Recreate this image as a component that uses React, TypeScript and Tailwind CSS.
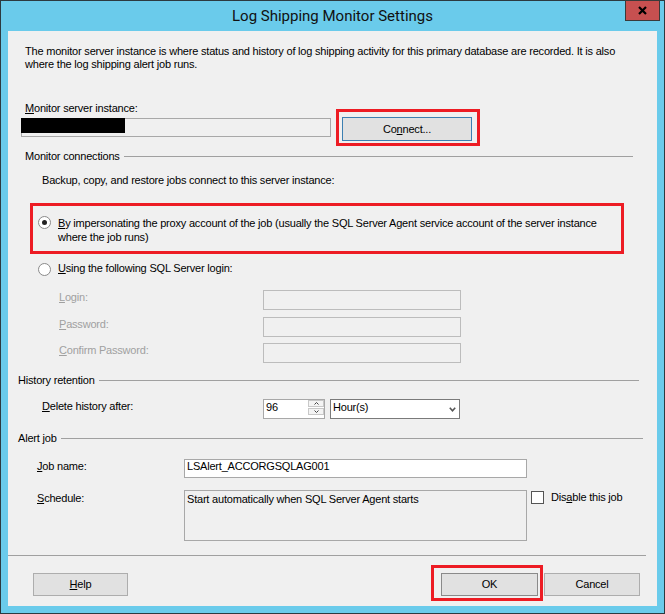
import React from 'react';

const Radio = ({ checked }: { checked?: boolean }) => (
  <span className="w-[13px] h-[13px] rounded-full border border-[#8a8a8a] bg-white flex items-center justify-center shrink-0">
    {checked && <span className="w-[5px] h-[5px] rounded-full bg-[#222]" />}
  </span>
);

const Btn: React.FC<{ className: string; children: React.ReactNode }> = ({ className, children }) => (
  <div className={`h-[23px] bg-[#e1e1e1] border flex items-center justify-center shrink-0 ${className}`}>{children}</div>
);

export default function App() {
  return (
    <div className="w-[665px] h-[614px] border border-[#2c3a40] bg-[#6acbeb] flex flex-col font-['Liberation_Sans',Arial,sans-serif] text-[11px] leading-[13px] tracking-[-0.2px] text-black select-none">
      {/* title bar */}
      <div className="relative h-[30px] shrink-0 flex items-center justify-center">
        <span className="text-[15px] leading-[20px] tracking-normal font-['Roboto',sans-serif] text-[#111]">Log Shipping Monitor Settings</span>
        <div className="absolute -top-px right-[4px] w-[35px] h-[21px] bg-[#c75050] border border-[#3a3a3a] flex items-center justify-center">
          <svg width="9" height="9" viewBox="0 0 9 9">
            <path d="M1 1 L8 8 M8 1 L1 8" stroke="#000" strokeWidth="2.2" />
          </svg>
        </div>
      </div>

      {/* client area */}
      <div className="mx-[7px] h-[575px] bg-[#f0f0f0] flex flex-col">
        <div className="pt-[14px] pl-[17px] whitespace-nowrap">
          The monitor server instance is where status and history of log shipping activity for this primary database are recorded. It is also
          <br />
          where the log shipping alert job runs.
        </div>

        <div className="mt-[31px] pl-[17px]"><u>M</u>onitor server instance:</div>
        <div className="mt-[3px] h-[19px] pl-[13px] flex items-center">
          <div className="relative w-[310px] h-[19px] border border-[#a8a8a8] bg-[#f0f0f0] shrink-0">
            <div className="absolute -left-px -top-px w-[104px] h-[15px] bg-black" />
          </div>
          <div className="ml-[5px] w-[144px] h-[37px] border-[3px] border-[#ed1c24] pl-[3px] pt-[5px] shrink-0">
            <Btn className="w-[130px] h-[24px] border-[#3c7fb1]">Co<u>n</u>nect...</Btn>
          </div>
        </div>

        <div className="mt-[13px] ml-[17px] mr-[24px] flex items-center">
          <span>Monitor connections</span>
          <div className="flex-1 h-px bg-[#a0a0a0] ml-[4px]" />
        </div>
        <div className="mt-[11px] pl-[34px]">Backup, copy, and restore jobs connect to this server instance:</div>

        <div className="mt-[16px] ml-[22px] w-[594px] h-[51px] border-[3px] border-[#ed1c24] pt-[10px] pl-[5px] flex items-start">
          <Radio checked />
          <div className="ml-[7px] leading-[14px] whitespace-nowrap">
            <u>B</u>y impersonating the proxy account of the job (usually the SQL Server Agent service account of the server instance
            <br />
            where the job runs)
          </div>
        </div>

        <div className="mt-[7px] pl-[30px] flex items-start leading-[14px]">
          <div className="mt-[2px]"><Radio /></div>
          <div className="ml-[7px]"><u>U</u>sing the following SQL Server login:</div>
        </div>

        <div className="mt-[14px] h-[20px] flex items-start">
          <div className="w-[255px] pl-[51px] mt-[1px] text-[#a0a0a0] shrink-0"><u>L</u>ogin:</div>
          <div className="w-[198px] h-[20px] border border-[#bcbcbc] bg-[#f0f0f0]" />
        </div>
        <div className="mt-[7px] h-[20px] flex items-start">
          <div className="w-[255px] pl-[51px] mt-[1px] text-[#a0a0a0] shrink-0"><u>P</u>assword:</div>
          <div className="w-[198px] h-[20px] border border-[#bcbcbc] bg-[#f0f0f0]" />
        </div>
        <div className="mt-[6px] h-[20px] flex items-start">
          <div className="w-[255px] pl-[51px] mt-[1px] text-[#a0a0a0] shrink-0"><u>C</u>onfirm Password:</div>
          <div className="w-[198px] h-[20px] border border-[#bcbcbc] bg-[#f0f0f0]" />
        </div>

        <div className="mt-[11px] ml-[10px] mr-[18px] flex items-center">
          <span>History retention</span>
          <div className="flex-1 h-px bg-[#a0a0a0] ml-[4px]" />
        </div>
        <div className="mt-[12px] h-[20px] flex items-start">
          <div className="w-[255px] pl-[34px] mt-px shrink-0"><u>D</u>elete history after:</div>
          <div className="w-[62px] h-[20px] border border-[#a8a8a8] bg-white flex shrink-0">
            <div className="flex-1 pl-[2px] pt-px">96</div>
            <div className="w-[16px] flex flex-col gap-px">
              <div className="h-[7px] border border-[#c8c8c8] bg-[#f4f4f4] flex items-center justify-center">
                <svg width="5" height="3" viewBox="0 0 5 3"><path d="M0.5 2.5 L2.5 0.5 L4.5 2.5" stroke="#444" fill="none" /></svg>
              </div>
              <div className="h-[7px] border border-[#c8c8c8] bg-[#f4f4f4] flex items-center justify-center">
                <svg width="5" height="3" viewBox="0 0 5 3"><path d="M0.5 0.5 L2.5 2.5 L4.5 0.5" stroke="#444" fill="none" /></svg>
              </div>
            </div>
          </div>
          <div className="ml-[5px] w-[130px] h-[20px] border border-[#7a7a7a] bg-white flex items-start shrink-0">
            <div className="flex-1 pl-[2px] pt-px">Hour(s)</div>
            <div className="mr-[3px] mt-[7px]">
              <svg width="7" height="5" viewBox="0 0 7 5"><path d="M0.8 0.8 L3.5 3.8 L6.2 0.8" stroke="#555" strokeWidth="1.6" fill="none" /></svg>
            </div>
          </div>
        </div>

        <div className="mt-[13px] ml-[10px] mr-[14px] flex items-center">
          <span>Alert job</span>
          <div className="flex-1 h-px bg-[#a0a0a0] ml-[4px]" />
        </div>
        <div className="mt-[14px] h-[19px] flex items-start">
          <div className="w-[176px] pl-[29px] mt-px shrink-0"><u>J</u>ob name:</div>
          <div className="w-[343px] h-[19px] border border-[#a8a8a8] bg-white pl-[2px] shrink-0">LSAlert_ACCORGSQLAG001</div>
        </div>
        <div className="mt-[12px] flex items-start">
          <div className="w-[176px] pl-[29px] mt-[2px] shrink-0"><u>S</u>chedule:</div>
          <div className="w-[343px] h-[51px] border border-[#a8a8a8] bg-[#f0f0f0] pl-[2px] pt-[2px] shrink-0">
            Start automatically when SQL Server Agent starts
          </div>
          <div className="ml-[4px] mt-[1px] w-[13px] h-[13px] border border-[#555] bg-white shrink-0" />
          <div className="ml-[7px] mt-px">Dis<u>a</u>ble this job</div>
        </div>

        <div className="mt-[14px] mr-[11px] h-px bg-[#a0a0a0]" />

        <div className="mt-[17px] h-[23px] flex items-start">
          <Btn className="ml-[25px] w-[95px] border-[#adadad]"><u>H</u>elp</Btn>
          <div className="ml-[303px] -mt-[8px] -mb-[5px] w-[112px] h-[36px] border-[3px] border-[#ed1c24] pt-[5px] pl-[7px] shrink-0">
            <Btn className="w-[97px] border-[#8a8a8a]">OK</Btn>
          </div>
          <Btn className="ml-[1px] w-[96px] border-[#adadad]">Cancel</Btn>
        </div>
      </div>
    </div>
  );
}
